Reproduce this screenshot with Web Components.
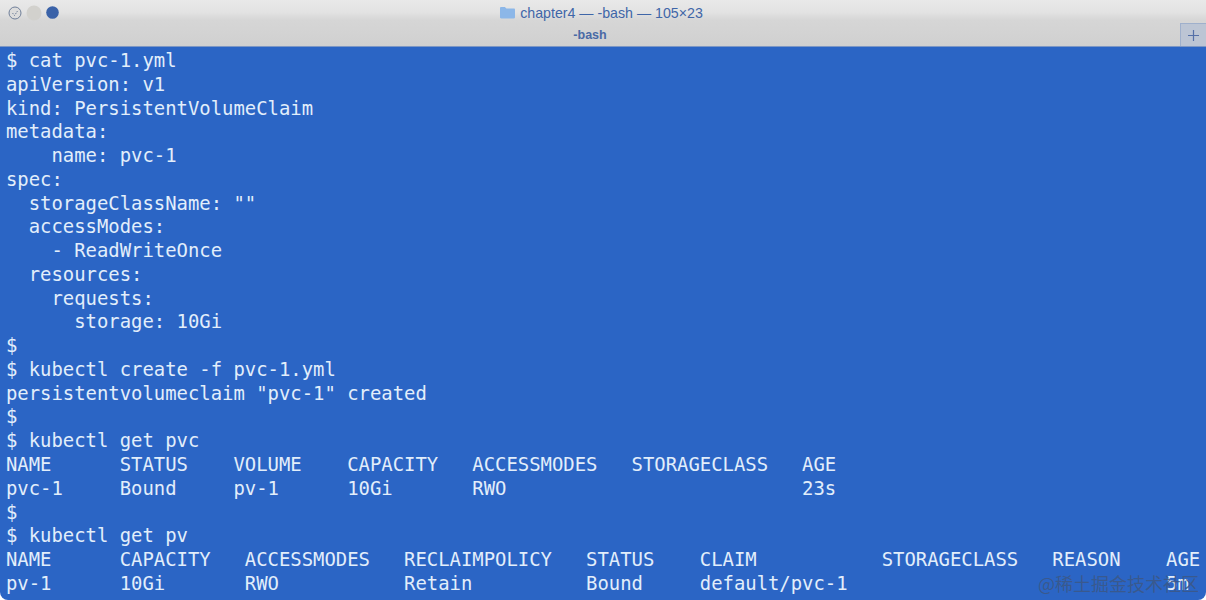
<!DOCTYPE html>
<html>
<head>
<meta charset="utf-8">
<style>
  html, body { margin: 0; padding: 0; background: #fff; overflow: hidden; }
</style>
</head>
<body>
<term-window>
  <term-titlebar slot="bar" title-text="chapter4 — -bash — 105×23" tab-text="-bash"></term-titlebar>
  <term-line>$ cat pvc-1.yml</term-line>
  <term-line>apiVersion: v1</term-line>
  <term-line>kind: PersistentVolumeClaim</term-line>
  <term-line>metadata:</term-line>
  <term-line>    name: pvc-1</term-line>
  <term-line>spec:</term-line>
  <term-line>  storageClassName: ""</term-line>
  <term-line>  accessModes:</term-line>
  <term-line>    - ReadWriteOnce</term-line>
  <term-line>  resources:</term-line>
  <term-line>    requests:</term-line>
  <term-line>      storage: 10Gi</term-line>
  <term-line>$</term-line>
  <term-line>$ kubectl create -f pvc-1.yml</term-line>
  <term-line>persistentvolumeclaim "pvc-1" created</term-line>
  <term-line>$</term-line>
  <term-line>$ kubectl get pvc</term-line>
  <term-line>NAME      STATUS    VOLUME    CAPACITY   ACCESSMODES   STORAGECLASS   AGE</term-line>
  <term-line>pvc-1     Bound     pv-1      10Gi       RWO                          23s</term-line>
  <term-line>$</term-line>
  <term-line>$ kubectl get pv</term-line>
  <term-line>NAME      CAPACITY   ACCESSMODES   RECLAIMPOLICY   STATUS    CLAIM           STORAGECLASS   REASON    AGE</term-line>
  <term-line>pv-1      10Gi       RWO           Retain          Bound     default/pvc-1                            5m</term-line>
  <water-mark slot="over">@稀土掘金技术社区</water-mark>
</term-window>

<script>
class TermWindow extends HTMLElement {
  constructor() {
    super();
    this.attachShadow({ mode: 'open' });
    this.shadowRoot.innerHTML = `
      <style>
        :host { display: flex; flex-direction: column; width: 1206px; height: 600px; overflow: hidden; position: relative; background: #fff; }
        .screen {
          flex: 1; min-height: 0; background: #2b65c5; padding: 2px 6px 0;
          border-top: 1px solid #7d97c4; border-radius: 0 0 8px 8px;
          overflow: hidden;
        }
      </style>
      <slot name="bar"></slot>
      <div class="screen"><slot></slot></div>
      <slot name="over"></slot>
    `;
  }
}

class TermTitlebar extends HTMLElement {
  constructor() {
    super();
    this.attachShadow({ mode: 'open' });
  }
  connectedCallback() {
    this.shadowRoot.innerHTML = `
      <style>
        :host {
          display: grid; grid-template-rows: 23px 23px; height: 46px; flex: none;
          background: linear-gradient(#e9e9e9 0, #e3e3e3 12px, #d6d6d6 20px, #d0d0d0 100%);
          font-family: "Liberation Sans", Arial, sans-serif; color: #3f66a8;
        }
        .top { display: grid; grid-template-columns: 1fr auto 1fr; align-items: center; padding-top: 2px; }
        .lights { display: flex; gap: 4px; padding-left: 8px; align-items: center; }
        .title { display: flex; align-items: center; gap: 4px; font-size: 14.2px; margin-left: 2px; margin-right: 6px; }
        .tabs { display: grid; grid-template-columns: 1fr 26px; align-items: center; }
        .tab { text-align: center; font-size: 12.5px; font-weight: bold; color: #4a6aa6; padding-right: 0; padding-top: 1px; }
        .plus { height: 23px; display: flex; align-items: center; justify-content: center; background: #bcc5d4; border: 1px solid #9fb0cc; border-width: 1px 0 0 1px; box-sizing: border-box; }
        svg { display: block; }
      </style>
      <div class="top">
        <div class="lights">
          <svg width="14" height="14" viewBox="0 0 14 14"><circle cx="7" cy="7" r="6" fill="#dcdcdc" stroke="#6f7f99"/><path d="M4.5 7l2 2.5 3-4.5" fill="none" stroke="#6f7f99" stroke-width="1" stroke-dasharray="1.5 1"/></svg>
          <svg width="16" height="16" viewBox="0 0 16 16"><circle cx="8" cy="8" r="7.5" fill="#d2d1cd"/></svg>
          <svg width="13" height="13" viewBox="0 0 13 13"><circle cx="6.5" cy="6.5" r="6.3" fill="#3a62a8"/></svg>
        </div>
        <div class="title">
          <svg width="17" height="13" viewBox="0 0 17 13"><path d="M1 2.2C1 1.4 1.5 1 2.2 1h3.7l1.5 1.6h7.4c.8 0 1.2.5 1.2 1.2v7.4c0 .8-.5 1.2-1.2 1.2H2.2c-.7 0-1.2-.4-1.2-1.2z" fill="#8cb7e8"/></svg>
          <span>${this.getAttribute('title-text')}</span>
        </div>
        <div></div>
      </div>
      <div class="tabs">
        <div class="tab">${this.getAttribute('tab-text')}</div>
        <div class="plus">
          <svg width="13" height="13" viewBox="0 0 13 13"><path d="M6.5 1v11M1 6.5h11" stroke="#5470a8" stroke-width="1.2" fill="none"/></svg>
        </div>
      </div>
    `;
  }
}

class TermLine extends HTMLElement {
  constructor() {
    super();
    this.attachShadow({ mode: 'open' });
    // no whitespace around the slot, the host keeps spaces
    this.shadowRoot.innerHTML = `<style>
        :host {
          display: block; height: 23.77px; line-height: 23.77px; white-space: pre;
          font-family: "DejaVu Sans Mono", "Liberation Mono", monospace;
          font-size: 18.9px; color: #e2eefb;
        }
      </style><slot></slot>`;
  }
}

class WaterMark extends HTMLElement {
  constructor() {
    super();
    this.attachShadow({ mode: 'open' });
    this.shadowRoot.innerHTML = `
      <style>
        :host {
          position: absolute; right: 7px; bottom: 6px;
          font-family: "Noto Sans CJK SC", "Liberation Sans", sans-serif;
          font-size: 18px; line-height: 22px; color: rgba(60, 88, 135, 0.9);
          white-space: nowrap;
        }
      </style>
      <slot></slot>
    `;
  }
}

customElements.define('term-window', TermWindow);
customElements.define('term-titlebar', TermTitlebar);
customElements.define('term-line', TermLine);
customElements.define('water-mark', WaterMark);
</script>
</body>
</html>
